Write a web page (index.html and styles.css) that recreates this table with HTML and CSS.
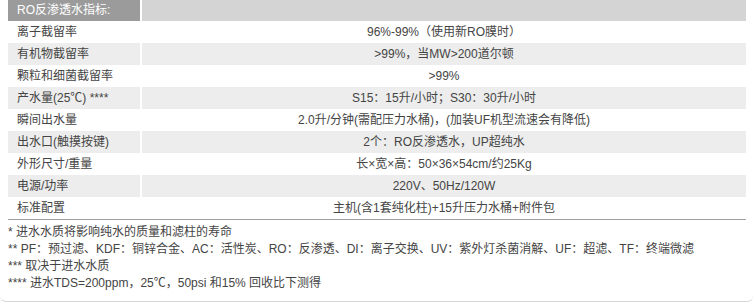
FILE: index.html
```html
<!DOCTYPE html>
<html lang="zh">
<head>
<meta charset="utf-8">
<link rel="stylesheet" href="styles.css">
</head>
<body>
<div class="box">
  <div class="spec">
    <div class="row head"><div class="k">RO反渗透水指标:</div><div class="v"></div></div>
    <div class="row"><div class="k">离子截留率</div><div class="v">96%-99%（使用新RO膜时）</div></div>
    <div class="row alt"><div class="k">有机物截留率</div><div class="v">&gt;99%，当MW&gt;200道尔顿</div></div>
    <div class="row"><div class="k">颗粒和细菌截留率</div><div class="v">&gt;99%</div></div>
    <div class="row alt"><div class="k">产水量(25℃) ****</div><div class="v">S15：15升/小时；S30：30升/小时</div></div>
    <div class="row"><div class="k">瞬间出水量</div><div class="v">2.0升/分钟(需配压力水桶)，(加装UF机型流速会有降低)</div></div>
    <div class="row alt"><div class="k">出水口(触摸按键)</div><div class="v">2个：RO反渗透水，UP超纯水</div></div>
    <div class="row"><div class="k">外形尺寸/重量</div><div class="v">长×宽×高：50×36×54cm/约25Kg</div></div>
    <div class="row alt"><div class="k">电源/功率</div><div class="v">220V、50Hz/120W</div></div>
    <div class="row"><div class="k">标准配置</div><div class="v">主机(含1套纯化柱)+15升压力水桶+附件包</div></div>
  </div>
  <div class="notes">
    <p>* 进水水质将影响纯水的质量和滤柱的寿命</p>
    <p>** PF：预过滤、KDF：铜锌合金、AC：活性炭、RO：反渗透、DI：离子交换、UV：紫外灯杀菌消解、UF：超滤、TF：终端微滤</p>
    <p>*** 取决于进水水质</p>
    <p>**** 进水TDS=200ppm，25℃，50psi 和15% 回收比下测得</p>
  </div>
</div>
</body>
</html>
```
FILE: styles.css
```css
html, body {
  margin: 0;
  padding: 0;
  background: #fff;
}
body {
  font-family: "Liberation Sans", "Noto Sans CJK SC", sans-serif;
  font-size: 12px;
  color: #444;
}
.box {
  width: 753px;
  height: 301px;
  border-bottom: 1px solid #d8d8d8;
  border-radius: 0 0 6px 6px;
}
.spec {
  margin: 0 7px 0 8px;
  border-bottom: 1px solid #a0a0a0;
}
.row {
  display: grid;
  grid-template-columns: 132px 1fr;
  column-gap: 2px;
  height: 22px;
  line-height: 22px;
}
.row.head {
  height: 21px;
  line-height: 21px;
}
.row.alt .k, .row.alt .v {
  background: #ecedec;
}
.row.head .k {
  background: #9b9b9b;
  color: #fff;
}
.row.head .v {
  background: #d4d4d4;
}
.k {
  padding-left: 9px;
  white-space: nowrap;
}
.v {
  text-align: center;
  white-space: nowrap;
}
.notes {
  padding: 4px 0 0 8px;
}
.notes p {
  margin: 0;
  line-height: 17px;
  white-space: nowrap;
}
```
